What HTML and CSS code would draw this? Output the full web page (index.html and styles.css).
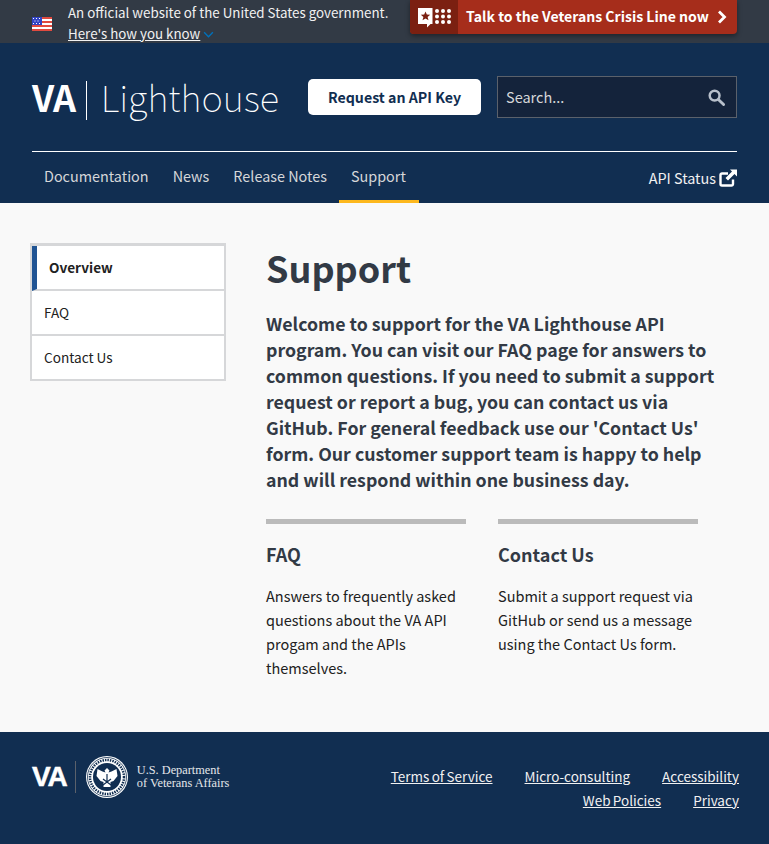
FILE: index.html
```html
<!DOCTYPE html>
<html lang="en">
<head>
  <meta charset="UTF-8" />
  <meta name="viewport" content="width=device-width, initial-scale=1.0" />
  <title>Support - VA Lighthouse</title>
  <link rel="stylesheet" href="styles.css">
</head>
<body>
  <div class="gov-banner">
    <svg class="flag" viewBox="0 0 20 14" width="20" height="14">
      <rect width="20" height="14" fill="#fff"/>
      <path d="M0 0h20v2H0zM0 4h20v2H0zM0 8h20v2H0zM0 12h20v2H0z" fill="#e04a3f"/>
      <rect width="10" height="8" fill="#3344c4"/>
      <path d="M1 1h1v1H1zM4 1h1v1H4zM7 1h1v1H7zM2.500 3.500h1v1h-1zM5.500 3.500h1v1h-1zM1 6h1v1H1zM4 6h1v1H4zM7 6h1v1H7z" fill="#fff"/>
    </svg>
    <div class="gov-text">
      <div>An official website of the United States government.</div>
      <div><a href="#">Here's how you know</a>
        <svg class="chevron" viewBox="0 0 12 8" width="11" height="7"><path d="M1 1.500l5 5 5-5" fill="none" stroke="#0071bb" stroke-width="1.600"/></svg>
      </div>
    </div>
    <a class="crisis" href="#">
      <span class="crisis-icon">
        <svg viewBox="0 0 33 20" width="33" height="20">
          <path d="M0 0h14.500v16h-2l-3.500 3.500V16H0z" fill="#fff"/>
          <path d="M7.500 3.500l1.300 3.100 3.400.2-2.600 2.100.9 3.300-3-1.800-3 1.800.9-3.300-2.600-2.100 3.400-.2z" fill="#7b2011"/>
          <g fill="#fff">
            <circle cx="19" cy="3" r="2"/><circle cx="25" cy="3" r="2"/><circle cx="31" cy="3" r="2"/>
            <circle cx="19" cy="8.500" r="2"/><circle cx="25" cy="8.500" r="2"/><circle cx="31" cy="8.500" r="2"/>
            <circle cx="19" cy="14" r="2"/><circle cx="25" cy="14" r="2"/><circle cx="31" cy="14" r="2"/>
          </g>
        </svg>
      </span>
      <span class="crisis-label">Talk to the Veterans Crisis Line now</span>
      <svg class="crisis-arrow" viewBox="0 0 10 14" width="10" height="14"><path d="M2 1.500L7.500 7 2 12.500" fill="none" stroke="#fff" stroke-width="2.800"/></svg>
    </a>
  </div>

  <header class="site-header">
    <div class="header-top">
      <a class="logo" href="#">
        <span class="logo-va">VA</span>
        <span class="logo-name">Lighthouse</span>
      </a>
      <a class="key-button" href="#">Request an API Key</a>
      <div class="search">
        <span>Search...</span>
        <svg viewBox="0 0 18 18" width="17" height="17"><circle cx="7" cy="7" r="5.200" fill="none" stroke="#b8c0cb" stroke-width="2.600"/><path d="M11 11l5.500 5.500" stroke="#b8c0cb" stroke-width="3" stroke-linecap="round"/></svg>
      </div>
    </div>
    <nav class="main-nav">
      <a href="#">Documentation</a>
      <a href="#">News</a>
      <a href="#">Release Notes</a>
      <a class="active" href="#">Support</a>
      <a class="status" href="#">API Status
        <svg viewBox="0 0 18 18" width="18" height="18"><path d="M14 10.500V15a1.500 1.500 0 0 1-1.500 1.500H3A1.500 1.500 0 0 1 1.500 15V6A1.500 1.500 0 0 1 3 4.500h6" fill="none" stroke="#fff" stroke-width="2.400"/><path d="M11 0.500h7v7l-2.500-2.500-6.500 6.500-2.500-2.500 6.500-6.500z" fill="#fff"/></svg>
      </a>
    </nav>
  </header>

  <div class="content">
    <aside class="side-nav">
      <a class="current" href="#">Overview</a>
      <a href="#">FAQ</a>
      <a href="#">Contact Us</a>
    </aside>
    <main class="support">
      <h1>Support</h1>
      <p class="lead">Welcome to support for the VA Lighthouse API program. You can visit our FAQ page for answers to common questions. If you need to submit a support request or report a bug, you can contact us via GitHub. For general feedback use our 'Contact Us' form. Our customer support team is happy to help and will respond within one business day.</p>
      <div class="cards">
        <section class="card">
          <h3>FAQ</h3>
          <p>Answers to frequently asked questions about the VA API progam and the APIs themselves.</p>
        </section>
        <section class="card">
          <h3>Contact Us</h3>
          <p>Submit a support request via GitHub or send us a message using the Contact Us form.</p>
        </section>
      </div>
    </main>
  </div>

  <footer class="site-footer">
    <div class="footer-logo">
      <span class="footer-va">VA</span>
      <svg class="seal" viewBox="0 0 44 44" width="44" height="44">
        <circle cx="22" cy="22" r="21" fill="#fff"/>
        <circle cx="22" cy="22" r="19.500" fill="none" stroke="#112e51" stroke-width="0.800"/>
        <circle cx="22" cy="22" r="17" fill="none" stroke="#112e51" stroke-width="2.500" stroke-dasharray="1.500 1"/>
        <circle cx="22" cy="22" r="14" fill="#112e51"/>
        <path d="M22 13l2.500 2.500-1 2 3-1 5-2.500 1 7-4 5-3 1v5h-7v-5l-3-1-4-5 1-7 5 2.500 3 1-1-2z" fill="#fff"/>
        <path d="M22 19v8M18 30l8-6M26 30l-8-6" stroke="#112e51" stroke-width="1.200"/>
      </svg>
      <span class="dept">U.S. Department<br>of Veterans Affairs</span>
    </div>
    <div class="footer-links">
      <a href="#">Terms of Service</a>
      <a href="#">Micro-consulting</a>
      <a href="#">Accessibility</a>
      <a href="#">Web Policies</a>
      <a href="#">Privacy</a>
    </div>
  </footer>
</body>
</html>
```

FILE: styles.css
```css
body {
  font-family: "Noto Sans CJK SC", "Open Sans", sans-serif;
  font-size: 14.500px;
  line-height: 24px;
  margin: 0;
  background: #f9f9f9;
  color: #212121;
}
a {
  color: inherit;
  text-decoration: none;
}
.gov-banner {
  background: #323a45;
  color: #f1f1f1;
  height: 43px;
  padding: 0 32px;
  display: flex;
  align-items: flex-start;
  font-size: 13.350px;
  line-height: 21px;
}
.flag {
  margin: 17px 16px 0 0;
}
.gov-text {
  padding-top: 2px;
  width: 342px;
  white-space: nowrap;
}
.gov-text a {
  text-decoration: underline;
}
.chevron {
  margin-left: 0;
  vertical-align: 1px;
}
.crisis {
  background: #a62d1b;
  color: #fff;
  height: 34px;
  width: 327px;
  border-radius: 0 0 4px 4px;
  box-shadow: 0 2px 5px rgba(0,0,0,0.4);
  display: flex;
  align-items: center;
  font-weight: 700;
  font-size: 14.050px;
  white-space: nowrap;
}
.crisis-icon {
  background: #7b2011;
  width: 48px;
  height: 34px;
  box-sizing: border-box;
  padding: 8px 0 0 8px;
  border-radius: 0 0 0 4px;
  margin-right: 8px;
}
.crisis-label {
  padding-bottom: 2px;
}
.crisis-arrow {
  margin-left: 8px;
}
.site-header {
  background: #112e51;
  height: 160px;
  padding: 0 32px;
  color: #fff;
}
.header-top {
  height: 108px;
  display: flex;
  align-items: center;
  border-bottom: 1px solid #fff;
}
.logo {
  width: 276px;
  height: 39px;
  margin-top: 7px;
  display: flex;
  align-items: flex-start;
  line-height: 30px;
}
.logo-va {
  font-size: 36px;
  font-weight: 700;
  letter-spacing: -0.500px;
  padding: 0 10px 9px 0;
  border-right: 1px solid #fff;
}
.logo-name {
  font-size: 36.400px;
  font-weight: 100;
  padding-left: 14px;
}
.key-button {
  background: #fff;
  color: #112e51;
  font-weight: 700;
  font-size: 14.200px;
  width: 173px;
  height: 36px;
  line-height: 36px;
  text-align: center;
  border-radius: 5px;
}
.search {
  margin-left: 16px;
  width: 240px;
  height: 42px;
  box-sizing: border-box;
  background: #14233b;
  border: 1px solid #5b616b;
  color: #d6d7d9;
  padding: 0 11px 0 8px;
  display: flex;
  align-items: center;
  justify-content: space-between;
}
.main-nav {
  display: flex;
  height: 51px;
  font-size: 14.400px;
}
.main-nav a {
  color: #d6d7d9;
  padding: 12px 12px 0;
  box-sizing: border-box;
}
.main-nav a.active {
  padding-right: 13px;
  border-bottom: 3px solid #fdb81e;
}
.main-nav a.status {
  margin-left: auto;
  padding: 14px 0 0;
  color: #f1f1f1;
  display: flex;
  align-items: flex-start;
  gap: 3px;
}
.main-nav a.status svg {
  margin-top: 3px;
}
.content {
  display: flex;
  align-items: flex-start;
  padding: 40px 30px 0;
  height: 529px;
  box-sizing: border-box;
}
.side-nav {
  width: 196px;
  box-sizing: border-box;
  border: 2px solid #d6d7d9;
  border-top-width: 3px;
  background: #fff;
  font-size: 13.600px;
  margin-right: 40px;
  flex-shrink: 0;
}
.side-nav a {
  display: block;
  height: 45px;
  line-height: 43px;
  padding-left: 12px;
  box-sizing: border-box;
  border-bottom: 2px solid #d6d7d9;
}
.side-nav a:last-child {
  height: 43px;
  border-bottom: none;
}
.side-nav a.current {
  border-left: 5px solid #205493;
  font-weight: 700;
}
.support {
  color: #323a45;
  width: 450px;
}
h1 {
  font-size: 36px;
  line-height: 48px;
  margin: 0 0 19px;
  font-weight: 700;
}
.lead {
  font-size: 17.750px;
  line-height: 26px;
  font-weight: 700;
  margin: 0 0 27px;
}
.cards {
  display: flex;
  gap: 32px;
}
.card {
  width: 200px;
  border-top: 5px solid #bbb;
}
h3 {
  font-size: 18px;
  line-height: 26px;
  margin: 17px 0 17px;
  font-weight: 700;
}
.card p {
  margin: 0;
  color: #212121;
}
.site-footer {
  background: #112e51;
  height: 112px;
  padding: 20px 30px 0 32px;
  box-sizing: border-box;
  color: #fff;
  display: flex;
  justify-content: space-between;
}
.footer-logo {
  display: flex;
  align-items: center;
  height: 50px;
}
.footer-va {
  font-family: "Liberation Sans", sans-serif;
  font-size: 28px;
  font-weight: 700;
  letter-spacing: -1px;
  -webkit-text-stroke: 0.500px #fff;
  padding-right: 8px;
  border-right: 1px solid #5b616b;
  line-height: 32px;
  margin-right: 9px;
}
.dept {
  font-family: "Liberation Serif", serif;
  font-size: 12.300px;
  line-height: 13px;
  margin-left: 8px;
  color: #e4e7ea;
}
.footer-links {
  width: 360px;
  display: flex;
  flex-wrap: wrap;
  align-content: flex-start;
  justify-content: flex-end;
  column-gap: 32px;
  padding-top: 12px;
  font-size: 13.500px;
  word-spacing: -0.700px;
}
.footer-links a {
  text-decoration: underline;
  color: #f1f1f1;
}
```
